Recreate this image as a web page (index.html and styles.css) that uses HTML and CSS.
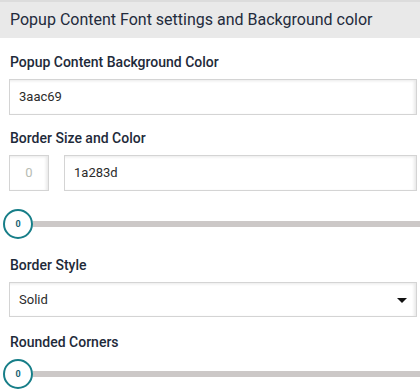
FILE: index.html
```html
<!DOCTYPE html>
<html>
<head>
<meta charset="utf-8">
<link rel="stylesheet" href="styles.css">
</head>
<body>
<div class="panel">
  <div class="panel-head">Popup Content Font settings and Background color</div>
  <div class="panel-body">
    <div class="label first">Popup Content Background Color</div>
    <div class="input">3aac69</div>

    <div class="label gap-input">Border Size and Color</div>
    <div class="row">
      <div class="input small">0</div>
      <div class="input grow">1a283d</div>
    </div>

    <div class="slider s1">
      <div class="thumb">0</div>
      <div class="track"></div>
    </div>

    <div class="label gap-slider">Border Style</div>
    <div class="input select">
      <span>Solid</span>
      <span class="caret"></span>
    </div>

    <div class="label gap-select">Rounded Corners</div>
    <div class="slider s2">
      <div class="thumb">0</div>
      <div class="track"></div>
    </div>
  </div>
</div>
</body>
</html>
```

FILE: styles.css
```css
html, body {
  margin: 0;
  padding: 0;
  background: #ffffff;
}
body {
  font-family: Roboto, "Liberation Sans", sans-serif;
  color: #1e2a3a;
}
.panel {
  width: 420px;
}
.panel-head {
  border-top: 2px solid #dcdcdc;
  background: #e9e9e9;
  height: 36px;
  line-height: 36px;
  padding-left: 10px;
  font-size: 16px;
  color: #232b3c;
  box-sizing: content-box;
}
.panel-body {
  padding: 0 3px 0 9px;
}
.label {
  font-size: 14px;
  font-weight: 500;
  line-height: 20px;
  margin-bottom: 7px;
  padding-left: 1px;
  color: #1e2a3a;
}
.label.first { margin-top: 14px; }
.label.gap-input { margin-top: 13px; }
.label.gap-slider { margin-top: 16px; }
.label.gap-select { margin-top: 15px; }
.input {
  height: 36px;
  box-sizing: border-box;
  border: 1px solid #d4d4d4;
  background: #fff;
  box-shadow: inset -2px 1px 3px rgba(0,0,0,0.09);
  font-size: 13px;
  line-height: 34px;
  padding-left: 9px;
  color: #2b2b2b;
}
.row {
  display: flex;
  gap: 15px;
}
.input.small {
  width: 40px;
  flex: none;
  padding: 0;
  text-align: center;
  color: #b7bcb4;
}
.input.grow {
  flex: 1;
}
.input.select {
  height: 35px;
  line-height: 33px;
  display: flex;
  justify-content: space-between;
  align-items: center;
  padding-right: 9px;
}
.caret {
  width: 0;
  height: 0;
  border-left: 5px solid transparent;
  border-right: 5px solid transparent;
  border-top: 5px solid #111;
  margin-top: 1px;
}
.slider {
  display: flex;
  align-items: center;
  margin-left: -6px;
  margin-right: -3px;
}
.slider.s1 { margin-top: 18px; }
.thumb {
  width: 30px;
  height: 30px;
  box-sizing: border-box;
  border: 2px solid #177e88;
  border-radius: 50%;
  background: #fff;
  flex: none;
  display: flex;
  align-items: center;
  justify-content: center;
  font-size: 9px;
  font-weight: 700;
  color: #1b5f72;
}
.track {
  flex: 1;
  height: 6px;
  background: #ccc8c7;
}
```
